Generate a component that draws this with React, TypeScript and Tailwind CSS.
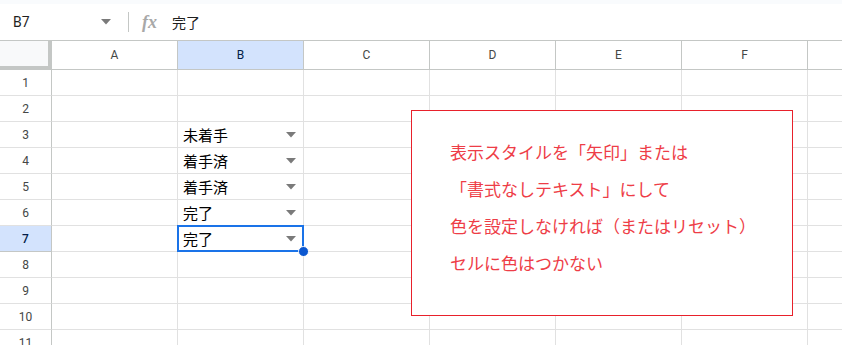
const cols = ["A", "B", "C", "D", "E", "F", "G"];
const values: Record<number, string> = { 3: "未着手", 4: "着手済", 5: "着手済", 6: "完了", 7: "完了" };

function Arrow() {
  return (
    <svg width="10" height="6" viewBox="0 0 10 6" className="shrink-0">
      <path d="M0 0 H10 L5 5.5 Z" fill="#7a7a7a" />
    </svg>
  );
}

export default function App() {
  const rows = Array.from({ length: 11 }, (_, i) => i + 1);

  return (
    <div className="relative w-[842px] h-[345px] overflow-hidden bg-white font-['Roboto','Liberation_Sans','Noto_Sans_CJK_JP',sans-serif] text-[#1f1f1f]">
      <div className="h-[4px] bg-[#f9fbfd]" />

      {/* formula bar */}
      <div className="h-[36px] flex items-center">
        <div className="w-[120px] pl-[13px] pr-[9px] flex items-center justify-between">
          <span className="text-[14px]">B7</span>
          <Arrow />
        </div>
        <div className="w-px h-[20px] bg-[#c4c7c5] ml-[8px]" />
        <span className="ml-[13px] w-[30px] text-[18px] italic font-bold font-['Liberation_Serif',serif] text-[#a8a8a8]">fx</span>
        <span className="text-[14px] font-['Noto_Sans_CJK_JP',sans-serif]">完了</span>
      </div>

      {/* column header */}
      <div className="flex h-[30px] border-t border-[#c4c7c5]">
        <div className="w-[52px] shrink-0 bg-[#f8f9fa] border-r-4 border-b-4 border-[#c4c7c5]" />
        {cols.map((c) => (
          <div
            key={c}
            className={`w-[126px] shrink-0 flex items-center justify-center text-[12px] border-r border-b border-[#c4c7c5] ${
              c === "B" ? "bg-[#d3e3fd] text-[#041e49]" : "text-[#444746]"
            }`}
          >
            {c === "G" ? "" : c}
          </div>
        ))}
      </div>

      {/* body */}
      {rows.map((r) => (
        <div key={r} className="flex h-[26px]">
          <div
            className={`w-[52px] shrink-0 flex items-center justify-center text-[12px] border-r border-b ${
              r === 7
                ? "bg-[#d3e3fd] text-[#041e49] font-medium border-[#c4c7c5]"
                : "text-[#444746] border-[#e1e1e1] border-r-[#c4c7c5]"
            }`}
          >
            {r}
          </div>
          {cols.map((c) => {
            const v = c === "B" ? values[r] : undefined;
            const selected = c === "B" && r === 7;
            return (
              <div
                key={c}
                className={`relative w-[126px] shrink-0 border-r border-b border-[#e1e1e1] ${selected ? "z-10" : ""}`}
              >
                {v && (
                  <div className="h-full flex items-center justify-between pl-[5px] pr-[7px]">
                    <span className="text-[15px] leading-none font-['Noto_Sans_CJK_JP',sans-serif] text-black">{v}</span>
                    <Arrow />
                  </div>
                )}
                {selected && (
                  <>
                    <div className="absolute -left-px -top-px -right-px -bottom-px border-2 border-[#1a73e8]" />
                    <div className="absolute -right-[6px] -bottom-[6px] w-[11px] h-[11px] rounded-full bg-[#0b57d0] border border-white" />
                  </>
                )}
              </div>
            );
          })}
        </div>
      ))}

      {/* text box */}
      <div className="absolute z-20 left-[411px] top-[110px] w-[382px] h-[206px] bg-white border border-[#e8212b] pl-[38px] pt-[22px] text-[17px] leading-[37px] text-[#ee3d47] font-['Noto_Sans_CJK_JP',sans-serif]">
        <p>表示スタイルを「矢印」または</p>
        <p>「書式なしテキスト」にして</p>
        <p>色を設定しなければ（またはリセット）</p>
        <p>セルに色はつかない</p>
      </div>
    </div>
  );
}
